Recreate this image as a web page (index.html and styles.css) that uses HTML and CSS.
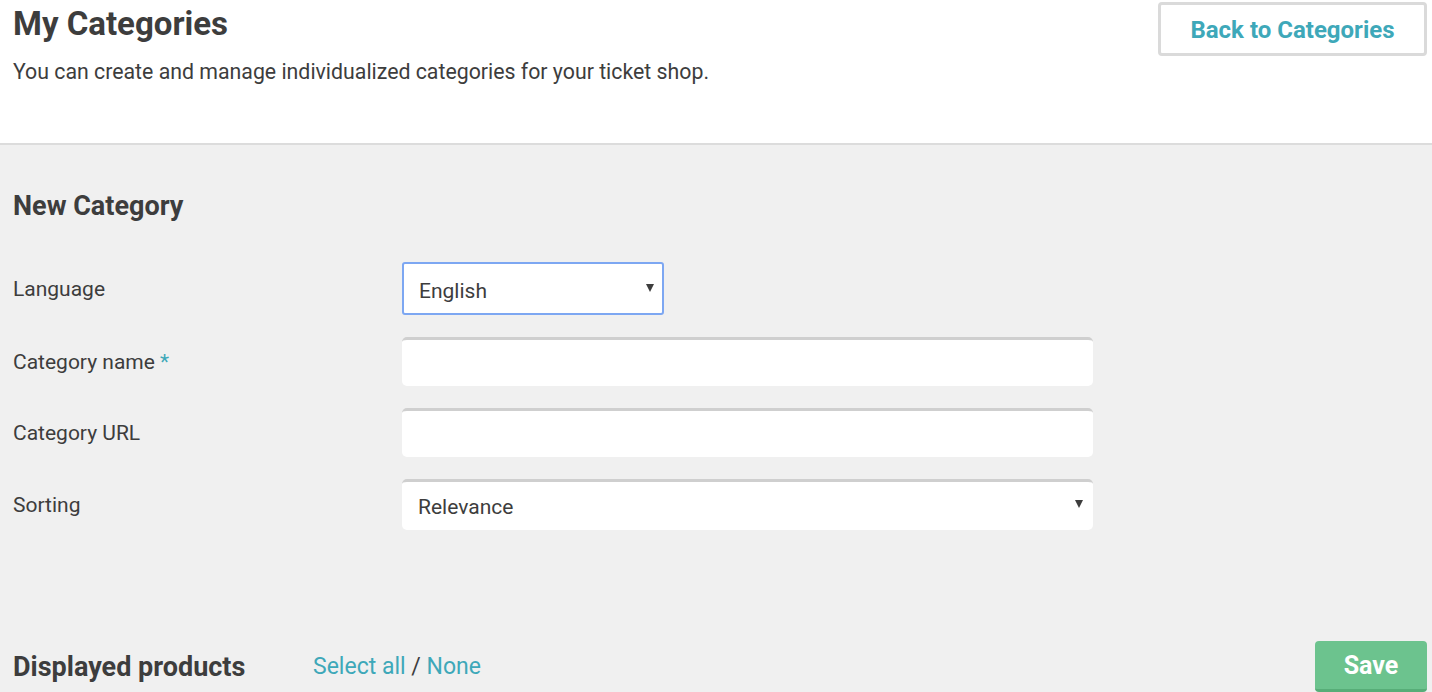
FILE: index.html
```html
<!DOCTYPE html>
<html lang="en">

<head>
    <meta charset="UTF-8">
    <meta name="viewport" content="width=device-width, initial-scale=1.0">
    <title>My Categories</title>
    <link rel="stylesheet" href="styles.css">
</head>

<body>
    <div class="top_bar">
        <div class="top_text">
            <h1 class="page_title">My Categories</h1>
            <p class="page_sub">You can create and manage individualized categories for your ticket shop.</p>
        </div>
        <button class="back_btn">Back to Categories</button>
    </div>

    <form class="cat_form">
        <h2 class="section_head">New Category</h2>

        <div class="form_row">
            <label class="row_label" for="language">Language</label>
            <div class="select_wrap small">
                <select class="form_field focused" id="language">
                    <option>English</option>
                </select>
            </div>
        </div>

        <div class="form_row">
            <label class="row_label" for="catName">Category name <span class="req">*</span></label>
            <input type="text" class="form_field" id="catName" />
        </div>

        <div class="form_row">
            <label class="row_label" for="catUrl">Category URL</label>
            <input type="text" class="form_field" id="catUrl" />
        </div>

        <div class="form_row">
            <label class="row_label" for="sorting">Sorting</label>
            <div class="select_wrap">
                <select class="form_field tall" id="sorting">
                    <option>Relevance</option>
                </select>
            </div>
        </div>

        <div class="products_row">
            <h2 class="section_head products_head">Displayed products</h2>
            <div class="select_links">
                <a href="#" class="link">Select all</a> / <a href="#" class="link">None</a>
            </div>
            <button type="submit" class="save_btn">Save</button>
        </div>
    </form>
</body>

</html>
```

FILE: styles.css
```css
body {
    margin: 0;
    padding: 0;
    background-color: #f0f0f0;
    font-family: Roboto, "Liberation Sans", sans-serif;
    color: #3d3d3d;
    overflow: hidden;
}

.top_bar {
    display: flex;
    justify-content: space-between;
    align-items: flex-start;
    background-color: #fff;
    border-bottom: 2px solid #dcdcdc;
    height: 145px;
    box-sizing: border-box;
    padding: 0 5px 0 13px;
}

.page_title {
    font-size: 33px;
    font-weight: 700;
    margin: 4px 0 0 0;
    line-height: 40px;
}

.page_sub {
    font-size: 21.3px;
    margin: 15px 0 0 0;
    line-height: 26px;
}

.back_btn {
    margin-top: 2px;
    width: 269px;
    height: 54px;
    background: #fff;
    border: 3px solid #dadada;
    border-radius: 4px;
    color: #3ea8b9;
    font-family: inherit;
    font-size: 24px;
    font-weight: 700;
    padding-top: 2px;
}

.cat_form {
    padding: 45px 5px 0 13px;
}

.section_head {
    font-size: 27px;
    font-weight: 700;
    margin: 0;
    line-height: 32px;
}

.form_row {
    display: flex;
    align-items: center;
    margin-top: 22px;
}

.form_row:first-of-type {
    margin-top: 40px;
}

.row_label {
    width: 389px;
    font-size: 21px;
}

.req {
    color: #3ea8b9;
}

.form_field {
    width: 691px;
    height: 49px;
    box-sizing: border-box;
    border: none;
    border-top: 3px solid #cfcfcf;
    border-radius: 5px;
    background: #fff;
    font-family: inherit;
    font-size: 21px;
    color: #3d3d3d;
    padding: 0 16px;
    appearance: none;
    outline: none;
}

.form_field.tall {
    height: 51px;
    padding-top: 2px;
}

.select_wrap {
    position: relative;
}

.select_wrap::after {
    content: "";
    position: absolute;
    right: 10px;
    top: 21px;
    border-left: 4px solid transparent;
    border-right: 4px solid transparent;
    border-top: 8px solid #3d3d3d;
}

.select_wrap.small::after {
    top: 22px;
}

.form_field.focused {
    width: 262px;
    height: 53px;
    border: 2px solid #7da7f2;
    border-radius: 3px;
    padding: 4px 15px 0 15px;
}

.products_row {
    display: flex;
    align-items: center;
    margin-top: 111px;
}

.products_head {
    width: 300px;
}

.select_links {
    font-size: 23px;
    flex: 1;
}

.link {
    color: #3ea8b9;
    text-decoration: none;
}

.save_btn {
    width: 112px;
    height: 51px;
    border: none;
    border-bottom: 3px solid #57ad78;
    border-radius: 4px;
    background: #6cc38e;
    color: #fff;
    font-family: inherit;
    font-size: 25px;
    font-weight: 700;
    padding-top: 2px;
}
```
